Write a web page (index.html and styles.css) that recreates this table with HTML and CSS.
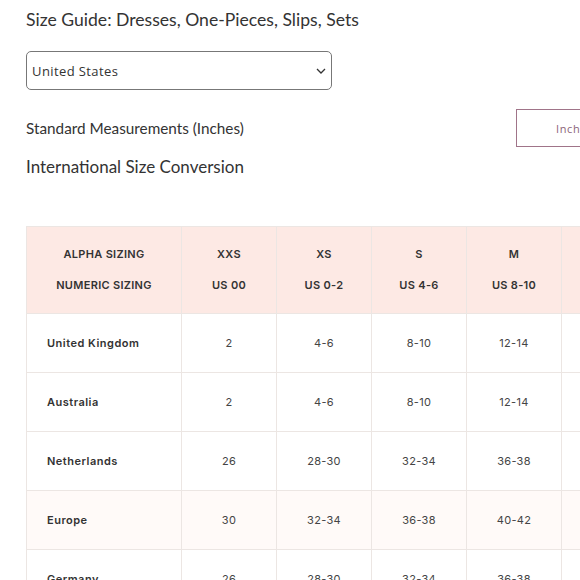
FILE: index.html
```html
<!DOCTYPE html>
<html>
<head>
<meta charset="utf-8">
<link rel="stylesheet" href="styles.css">
</head>
<body>
<div class="page">
  <h1 class="title">Size Guide: Dresses, One-Pieces, Slips, Sets</h1>
  <div class="select">
    <span class="select-text">United States</span>
    <svg class="chev" width="10" height="6" viewBox="0 0 10 6"><path d="M1 1 L5 5 L9 1" fill="none" stroke="#333" stroke-width="1.3"/></svg>
  </div>
  <div class="measure-row">
    <div class="subtitle">Standard Measurements (Inches)</div>
    <div class="toggle">Inch</div>
  </div>
  <h2 class="section">International Size Conversion</h2>
  <div class="table-wrap">
    <table class="sizes">
      <thead>
        <tr>
          <th class="first"><div>ALPHA SIZING</div><div>NUMERIC SIZING</div></th>
          <th><div>XXS</div><div>US 00</div></th>
          <th><div>XS</div><div>US 0-2</div></th>
          <th><div>S</div><div>US 4-6</div></th>
          <th><div>M</div><div>US 8-10</div></th>
          <th class="edge"></th>
        </tr>
      </thead>
      <tbody>
        <tr><td class="label">United Kingdom</td><td>2</td><td>4-6</td><td>8-10</td><td>12-14</td><td class="edge"></td></tr>
        <tr><td class="label">Australia</td><td>2</td><td>4-6</td><td>8-10</td><td>12-14</td><td class="edge"></td></tr>
        <tr><td class="label">Netherlands</td><td>26</td><td>28-30</td><td>32-34</td><td>36-38</td><td class="edge"></td></tr>
        <tr class="tint"><td class="label">Europe</td><td>30</td><td>32-34</td><td>36-38</td><td>40-42</td><td class="edge"></td></tr>
        <tr><td class="label">Germany</td><td>26</td><td>28-30</td><td>32-34</td><td>36-38</td><td class="edge"></td></tr>
      </tbody>
    </table>
  </div>
</div>
</body>
</html>
```
FILE: styles.css
```css
html, body {
  margin: 0;
  padding: 0;
  background: #fff;
  overflow: hidden;
}
.page {
  padding: 8px 0 0 26px;
  width: 554px;
  overflow: hidden;
}
.title {
  margin: 0;
  font-family: "Lato", sans-serif;
  font-weight: 400;
  font-size: 17.6px;
  line-height: 24px;
  color: #333;
}
.select {
  margin-top: 19px;
  height: 37px;
  border: 1px solid #777;
  border-radius: 5px;
  display: flex;
  align-items: center;
  justify-content: space-between;
  padding: 0 5px 0 5px;
  box-sizing: content-box;
  width: 294px;
}
.select-text {
  font-family: "Open Sans", sans-serif;
  font-size: 13px;
  letter-spacing: 0.4px;
  color: #333;
}
.measure-row {
  margin-top: 19px;
  display: flex;
  justify-content: space-between;
  align-items: center;
  height: 38px;
}
.subtitle {
  font-family: "Lato", sans-serif;
  font-size: 15.3px;
  color: #333;
}
.toggle {
  width: 24px;
  height: 36px;
  border: 1px solid #a07489;
  border-right: none;
  box-sizing: content-box;
  font-family: "Open Sans", sans-serif;
  font-size: 11px;
  letter-spacing: 0.6px;
  color: #8c6478;
  display: flex;
  align-items: center;
  padding-left: 39px;
  white-space: nowrap;
}
.section {
  margin: 8px 0 0 0;
  font-family: "Lato", sans-serif;
  font-weight: 400;
  font-size: 17px;
  line-height: 24px;
  color: #333;
}
.table-wrap {
  margin-top: 47px;
  width: 800px;
}
.sizes {
  border-collapse: collapse;
  font-family: "Inter", sans-serif;
  font-size: 11px;
  color: #444;
}
.sizes th, .sizes td {
  border: 1px solid #ece6e3;
  text-align: center;
  padding: 0;
}
.sizes th {
  background: #fde9e4;
  height: 86px;
  width: 94px;
  font-weight: 600;
  letter-spacing: 0.3px;
  color: #333;
  line-height: 31px;
}
.sizes th.first { width: 154px; }
.sizes td {
  height: 58px;
  letter-spacing: 0.3px;
}
.sizes td.label {
  text-align: left;
  padding-left: 20px;
  font-weight: 600;
  letter-spacing: 0.5px;
  color: #333;
}
.sizes tr.tint td { background: #fffaf8; }
```
